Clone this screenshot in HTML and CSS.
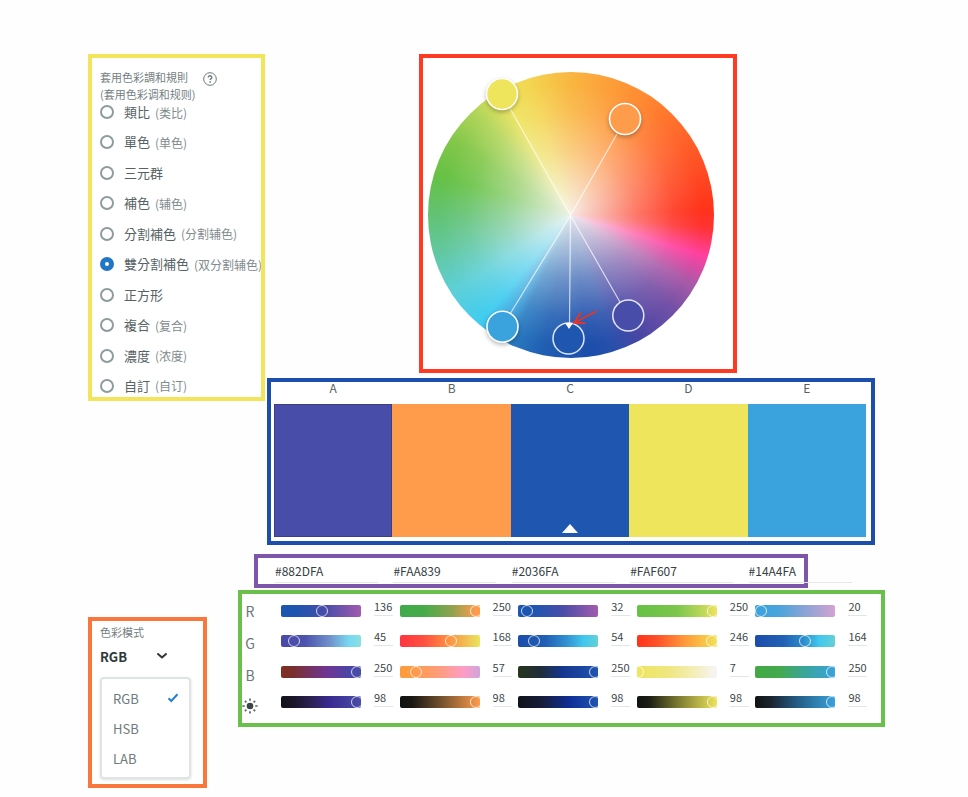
FILE: index.html
```html
<!DOCTYPE html>
<html lang="zh-Hant">
<head>
<meta charset="utf-8">
<meta name="viewport" content="width=device-width, initial-scale=1">
<title>色彩調和</title>
<link rel="stylesheet" href="styles.css">
</head>
<body>
<main class="page">
  <aside class="side">
    <section class="panel rules">
      <header class="rules-head">
        <h2>套用色彩調和規則<br><span lang="zh-Hans">(套用色彩调和规则)</span></h2>
        <button class="help" type="button" aria-label="說明">
          <svg viewBox="0 0 16 16" width="16" height="16" fill="none" stroke="currentColor"><circle cx="8" cy="8" r="6.3"/><path d="M6.2 6.6c0-2.4 3.6-2.3 3.6-.2 0 1.3-1.7 1.3-1.7 2.7" stroke-width="1.4"/><path d="M8.1 10.2v1.5" stroke-width="1.5"/></svg>
        </button>
      </header>
      <div class="rule-list" role="radiogroup" aria-label="套用色彩調和規則">
        <label><input type="radio" name="rule">類比<small lang="zh-Hans">(类比)</small></label>
        <label><input type="radio" name="rule">單色<small lang="zh-Hans">(单色)</small></label>
        <label><input type="radio" name="rule">三元群</label>
        <label><input type="radio" name="rule">補色<small lang="zh-Hans">(辅色)</small></label>
        <label><input type="radio" name="rule">分割補色<small lang="zh-Hans">(分割辅色)</small></label>
        <label><input type="radio" name="rule" checked>雙分割補色<small lang="zh-Hans">(双分割辅色)</small></label>
        <label><input type="radio" name="rule">正方形</label>
        <label><input type="radio" name="rule">複合<small lang="zh-Hans">(复合)</small></label>
        <label><input type="radio" name="rule">濃度<small lang="zh-Hans">(浓度)</small></label>
        <label><input type="radio" name="rule">自訂<small lang="zh-Hans">(自订)</small></label>
      </div>
    </section>

    <section class="panel mode">
      <label class="mode-label" for="mode">色彩模式</label>
      <div class="mode-select">
        <select id="mode"><option>RGB</option><option>HSB</option><option>LAB</option></select>
        <svg viewBox="0 0 12 8" width="12" height="8" fill="none" stroke="currentColor" stroke-width="2" stroke-linecap="round" stroke-linejoin="round"><path d="M2 2l4 3.600L10 2"/></svg>
      </div>
      <div class="mode-menu">
        <button type="button">RGB
          <svg viewBox="0 0 12 10" width="12" height="10" fill="none" stroke="#2680d0" stroke-width="2"><path d="M1.500 5.200L4.300 8 10.500 1.300"/></svg>
        </button>
        <button type="button">HSB</button>
        <button type="button">LAB</button>
      </div>
    </section>
  </aside>

  <div class="work">
    <section class="panel wheel">
      <div class="disc">
        <svg viewBox="0 0 286 286" role="img" aria-label="色輪">
          <g stroke="#fff" stroke-opacity=".7" stroke-width="1.200">
            <path d="M142.500 143.300L82 36.500M142.500 143.300L189 62M142.500 143.300L82 242M142.500 143.300L141.500 252M142.500 143.300L192.500 231"/>
          </g>
          <g class="knobs" stroke="#fff" stroke-width="1.600">
            <circle cx="74" cy="22" r="15.500" fill="#eee55d"/>
            <circle cx="197" cy="47" r="15.500" fill="#ff9c4b"/>
            <circle cx="74.500" cy="254.700" r="15.500" fill="#3aa2dc"/>
          </g>
          <g stroke="#fff" stroke-opacity=".85" stroke-width="1.500">
            <circle cx="140.500" cy="266.500" r="15.500" fill="#1f56af"/>
            <circle cx="200.300" cy="243.600" r="15.500" fill="#494daa"/>
          </g>
          <path d="M137 251h8l-4 6z" fill="#fff"/>
          <path d="M168 239.500L147 250.200M152.700 240.700L146 250.700L157 251.300" fill="none" stroke="#f0321e" stroke-width="1.700" stroke-linecap="round"/>
        </svg>
      </div>
    </section>

    <section class="panel palette">
      <ol>
        <li><span>A</span><i class="swatch a"></i></li>
        <li><span>B</span><i class="swatch b"></i></li>
        <li><span>C</span><i class="swatch c"></i></li>
        <li><span>D</span><i class="swatch d"></i></li>
        <li><span>E</span><i class="swatch e"></i></li>
      </ol>
    </section>

    <section class="panel hex">
      <div class="hex-row">
        <div><input aria-label="A" value="#882DFA"></div>
        <div><input aria-label="B" value="#FAA839"></div>
        <div><input aria-label="C" value="#2036FA"></div>
        <div><input aria-label="D" value="#FAF607"></div>
        <div><input aria-label="E" value="#14A4FA"></div>
      </div>
    </section>

    <section class="panel channels">
      <div class="names">
        <span>R</span><span>G</span><span>B</span>
        <span><svg viewBox="0 0 16 16" width="16" height="16"><circle cx="8" cy="8" r="3.300" fill="#3c4646"/><path d="M8 .4v2.400M8 13.200v2.400M.4 8h2.400M13.200 8h2.400M2.900 2.900l1.500 1.500M11.600 11.600l1.500 1.500M2.900 13.100l1.500-1.500M11.600 4.400l1.500-1.500" stroke="#5c6666" stroke-width="1.700"/></svg></span>
      </div>
      <div class="tracks" id="tracks"></div>
    </section>
  </div>
</main>
<script src="app.js"></script>
</body>
</html>
```
FILE: styles.css
```css
* { box-sizing: border-box; }

body {
  margin: 0;
  background: #fefefe;
  color: #566264;
  font-family: "Noto Sans CJK TC", "Noto Sans", sans-serif;
  font-size: 13px;
}

button, input, select { font: inherit; color: inherit; }
button { padding: 0; border: 0; background: none; text-align: left; }

.page {
  display: flex;
  gap: 2px;
  min-height: 100vh;
  padding: 54px 83px 9px 88px;
}

.panel { border: 4px solid; background: #fff; }

.side {
  flex: none;
  width: 177px;
  display: flex;
  flex-direction: column;
  align-items: flex-start;
  justify-content: space-between;
}

/* Harmony rules */
.rules {
  display: flex;
  flex-direction: column;
  width: 100%;
  min-height: 347px;
  padding: 11px 0 2px 8px;
  border-color: #f2e55c;
  overflow: hidden;
}

.rules-head { display: flex; gap: 7px; }

h2 {
  margin: 0;
  color: #748082;
  font-size: 11px;
  font-weight: 400;
  line-height: 17px;
}

.help { height: 18px; padding-top: 2px; color: #6c787a; }
.help svg { display: block; }

.rule-list {
  flex: 1;
  display: flex;
  flex-direction: column;
  justify-content: space-between;
}

.rule-list label {
  display: flex;
  align-items: center;
  height: 18px;
  line-height: 18px;
  white-space: nowrap;
}

.rule-list small {
  margin-left: 5px;
  padding-top: 1px;
  color: #7f8b8d;
  font-size: 12px;
}

.rule-list input {
  appearance: none;
  flex: none;
  width: 14px;
  height: 14px;
  margin: 0 10px 0 0;
  border: 2px solid #8e9c9e;
  border-radius: 50%;
}

.rule-list input:checked { border: 5px solid #2276c4; }

/* Colour mode */
.mode {
  width: 119px;
  padding: 2px 12px 5px 8px;
  border-color: #f9763d;
}

.mode-label {
  display: block;
  color: #748082;
  font-size: 11px;
  line-height: 18px;
}

.mode-select {
  display: grid;
  grid-template-columns: 56px 12px;
  align-items: center;
  height: 30px;
  color: #2f3839;
}

.mode-select select {
  grid-area: 1 / 1 / 2 / 3;
  appearance: none;
  padding: 0;
  border: 0;
  background: none;
  font-weight: 700;
}

.mode-select svg { grid-area: 1 / 2; pointer-events: none; }

.mode-menu {
  display: flex;
  flex-direction: column;
  margin-top: 6px;
  padding: 4px 10px 4px 11px;
  border: 2px solid #dfe4e4;
  border-radius: 4px;
  box-shadow: 0 1px 3px #0002;
}

.mode-menu button {
  display: flex;
  align-items: center;
  justify-content: space-between;
  height: 30px;
  color: #6f7b7d;
}

/* Wheel */
.work { flex: 1; min-width: 0; }

.wheel {
  width: 318px;
  margin-left: 152px;
  padding: 14px 0 11px 5px;
  border-color: #ff3a22;
}

.disc {
  width: 286px;
  height: 286px;
  border-radius: 50%;
  background:
    radial-gradient(closest-side, rgb(246 246 243 / 92%) 0, rgb(250 248 245 / 36%) 45%, rgb(255 255 255 / 10%) 72%, transparent 92%),
    conic-gradient(#f9b640 0deg, #ff8c33 30deg, #ff5a28 62deg, #ff321b 88deg, #ff3330 95deg,
      #ff40a0 107deg, #a85aa8 120deg, #7551a7 132deg, #4a46a5 150deg, #2750ab 163deg,
      #1b4dab 172deg, #205fb2 192deg, #2a7cc2 205deg, #3aa2dc 211deg, #40ccf0 220deg,
      #5ed0d8 237deg, #62c8a4 253deg, #62c273 270deg, #66c145 286deg, #82c74a 302deg,
      #b4d65c 318deg, #ede35c 331deg, #f3d652 342deg, #f9b640 360deg);
}

.disc svg { display: block; overflow: visible; }
.knobs { filter: drop-shadow(0 2px 2px #0004); }

/* Swatches */
.palette {
  margin: 5px 10px 0 0;
  padding: 0 5px 4px 3px;
  border-color: #1c4fac;
}

.palette ol {
  display: grid;
  grid-template-columns: repeat(5, 1fr);
  margin: 0;
  padding: 0;
  list-style: none;
}

.palette span {
  display: block;
  height: 22px;
  font-size: 12px;
  line-height: 12px;
  text-align: center;
}

.swatch {
  display: flex;
  align-items: flex-end;
  justify-content: center;
  height: 133px;
}

.a { border: 1px solid #3c3f86; background: #494daa; }
.b { background: #ff9c4b; }
.c { background: #1f56af; }
.d { background: #eee55d; }
.e { background: #3aa2dc; }

.c::after {
  content: "";
  margin-bottom: 4px;
  border: 8px solid transparent;
  border-top: 0;
  border-bottom: 9px solid #fff;
}

/* Hex values */
.hex {
  margin: 9px 77px 0 -13px;
  padding: 3px 0 1px 17px;
  border-color: #7d56ac;
}

.hex-row {
  display: grid;
  grid-template-columns: repeat(5, 1fr);
  margin-right: -63px;
}

.hex input {
  display: block;
  width: 103px;
  height: 22px;
  padding: 0 0 3px;
  border: 0;
  border-bottom: 1px solid #e4e8e8;
  background: none;
  color: #344042;
  font-size: 12px;
}

/* Channel sliders */
.channels {
  display: flex;
  gap: 23px;
  min-height: 136px;
  margin: 2px 0 0 -29px;
  padding: 0 7px 0 0;
  border-color: #6bc04b;
}

.names {
  flex: none;
  width: 16px;
  padding-top: 1px;
  color: #6a7678;
  font-size: 14px;
  line-height: 32px;
  text-align: center;
}

.names span { display: block; height: 32px; }
.names svg { display: block; margin: 0 auto; padding-top: 7px; height: 23px; overflow: visible; }

.tracks {
  flex: 1;
  display: grid;
  grid-template-columns: repeat(5, 1fr);
  align-content: space-between;
  padding: 5px 0 15px;
}

.track {
  display: flex;
  align-items: flex-end;
  gap: 13px;
  height: 18px;
}

.bar {
  flex: none;
  width: 80px;
  height: 12px;
  border-radius: 2px;
  overflow: hidden;
}

.bar input {
  appearance: none;
  display: block;
  width: 91px;
  height: 12px;
  margin: 0 0 0 -7px;
  background: none;
}

.bar input::-webkit-slider-thumb {
  appearance: none;
  width: 12px;
  height: 12px;
  border: 1px solid #ffffffc0;
  border-radius: 50%;
  background: none;
}

.track > input {
  width: 19px;
  height: 17px;
  margin-bottom: 1px;
  padding: 0 0 2px;
  border: 0;
  border-bottom: 1px solid #e0e5e5;
  background: none;
  color: #3c4648;
  font-size: 11px;
}
```
FILE: app.js
```js
const channels = [
  { name: "R", max: 255, cells: [
    [136, "#1b56b0,#1e56b0 20%,#484da8 55%,#a25bb0"],
    [250, "#3faa4a,#46ab4a 30%,#8fa24e 65%,#ff9b4c 95%"],
    [32, "#1b56b0,#1e56b0 20%,#484da8 55%,#a25bb0"],
    [250, "#66c145,#7cc64c 50%,#b8d65a 80%,#efe45c"],
    [20, "#3aa2dc,#4aa4dc 30%,#8fa4d6 65%,#d4a2d2"]] },
  { name: "G", max: 255, cells: [
    [45, "#4a48a8,#4c53ae 30%,#6f8fcb 60%,#78d8f2 85%,#8adfe0"],
    [168, "#ff3340,#ff5040 30%,#ff9040 60%,#f2b84f 80%,#e9e75f"],
    [54, "#1b4dab,#2160b5 35%,#2f90d0 60%,#40c8ee 82%,#66d0d6"],
    [246, "#ff3319,#ff5028 25%,#ff9a3a 60%,#f8c648 85%,#efe45c"],
    [164, "#1b4dab,#2160b5 35%,#2c8acb 60%,#40c8ee 80%,#66d0d6"]] },
  { name: "B", max: 255, cells: [
    [250, "#80301f,#7a2f2e 15%,#6f3596 58%,#4a46a5 85%,#4a4da8"],
    [57, "#ff9b38,#ff9b4c 20%,#ff9c80 50%,#fd9dc8 80%,#cfa5d8"],
    [250, "#28351c,#1f2c38 28%,#16358e 55%,#1f56b0"],
    [7, "#eee560,#efe780 40%,#f5eec0 75%,#f8f4fa"],
    [250, "#43a845,#45a94c 30%,#3aa4a0 65%,#3aa2dc"]] },
  { name: "亮度", max: 100, cells: [
    [98, "#111318,#1a1528 15%,#2d2358 40%,#382a90 60%,#4a4da8"],
    [98, "#111314,#1a1714 15%,#6f4f2c 50%,#ff9b4c"],
    [98, "#11131a,#171c3a 30%,#0f2f98 65%,#1f56b0"],
    [98, "#111314,#1c1d15 15%,#77772f 50%,#efe45c"],
    [98, "#111314,#1b2530 20%,#22587f 50%,#3aa2dc"]] }
];

const tracks = document.getElementById("tracks");

channels.forEach(({ name, max, cells }) => {
  cells.forEach(([value, stops], i) => {
    const label = `${"ABCDE"[i]} ${name}`;
    tracks.insertAdjacentHTML("beforeend",
      `<div class="track">
        <div class="bar" style="background:linear-gradient(90deg,${stops})">
          <input type="range" max="${max}" value="${value}" aria-label="${label}">
        </div>
        <input value="${value}" aria-label="${label}">
      </div>`);
  });
});
```
